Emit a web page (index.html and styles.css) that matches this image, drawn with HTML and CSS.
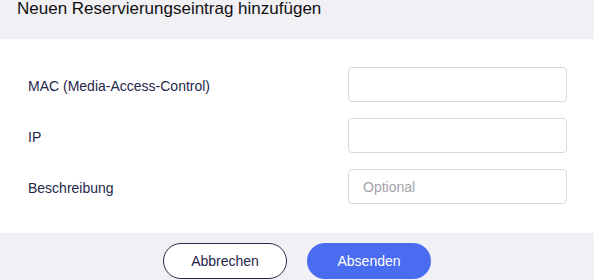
FILE: index.html
```html
<!DOCTYPE html>
<html lang="de">
<head>
    <meta charset="UTF-8">
    <meta name="viewport" content="width=device-width, initial-scale=1.0">
    <title>Neuen Reservierungseintrag hinzufügen</title>
    <link rel="stylesheet" href="styles.css">
</head>
<body>
    <div class="dialog">
        <div class="dialog-header">Neuen Reservierungseintrag hinzufügen</div>

        <div class="dialog-body">
            <div class="form-row">
                <label for="mac">MAC (Media-Access-Control)</label>
                <input type="text" id="mac">
            </div>
            <div class="form-row">
                <label for="ip">IP</label>
                <input type="text" id="ip">
            </div>
            <div class="form-row">
                <label for="desc">Beschreibung</label>
                <input type="text" id="desc" placeholder="Optional">
            </div>
        </div>

        <div class="dialog-footer">
            <button class="btn btn-cancel">Abbrechen</button>
            <button class="btn btn-submit">Absenden</button>
        </div>
    </div>
</body>
</html>
```

FILE: styles.css
```css
body {
    margin: 0;
    padding: 0;
    font-family: "Liberation Sans", Arial, sans-serif;
    background-color: #fff;
}

.dialog {
    width: 594px;
    height: 280px;
    overflow: hidden;
}

.dialog-header {
    height: 39px;
    background-color: #f1f0f5;
    color: #111;
    font-size: 17px;
    line-height: 17px;
    padding-left: 17px;
    box-sizing: border-box;
}

.dialog-body {
    padding: 28px 27px 29px 28px;
    display: flex;
    flex-direction: column;
    gap: 16px;
}

.form-row {
    display: flex;
    align-items: center;
    justify-content: space-between;
}

.form-row label {
    font-size: 14px;
    color: #25264a;
    padding-top: 2px;
}

.form-row input {
    width: 219px;
    height: 35px;
    box-sizing: border-box;
    border: 1px solid #dad9df;
    border-radius: 4px;
    padding: 0 14px;
    font-family: "Liberation Sans", Arial, sans-serif;
    font-size: 14px;
    outline: none;
}

.form-row input::placeholder {
    color: #a3a3ab;
}

.dialog-footer {
    height: 48px;
    background-color: #f1f0f5;
    display: flex;
    justify-content: center;
    gap: 20px;
    padding-top: 10px;
    box-sizing: border-box;
}

.btn {
    width: 124px;
    height: 36px;
    border-radius: 18px;
    font-family: "Liberation Sans", Arial, sans-serif;
    font-size: 14px;
    cursor: pointer;
}

.btn-cancel {
    background-color: #fff;
    border: 1px solid #25264a;
    color: #25264a;
}

.btn-submit {
    background-color: #4a6cf1;
    border: none;
    color: #fff;
}
```
